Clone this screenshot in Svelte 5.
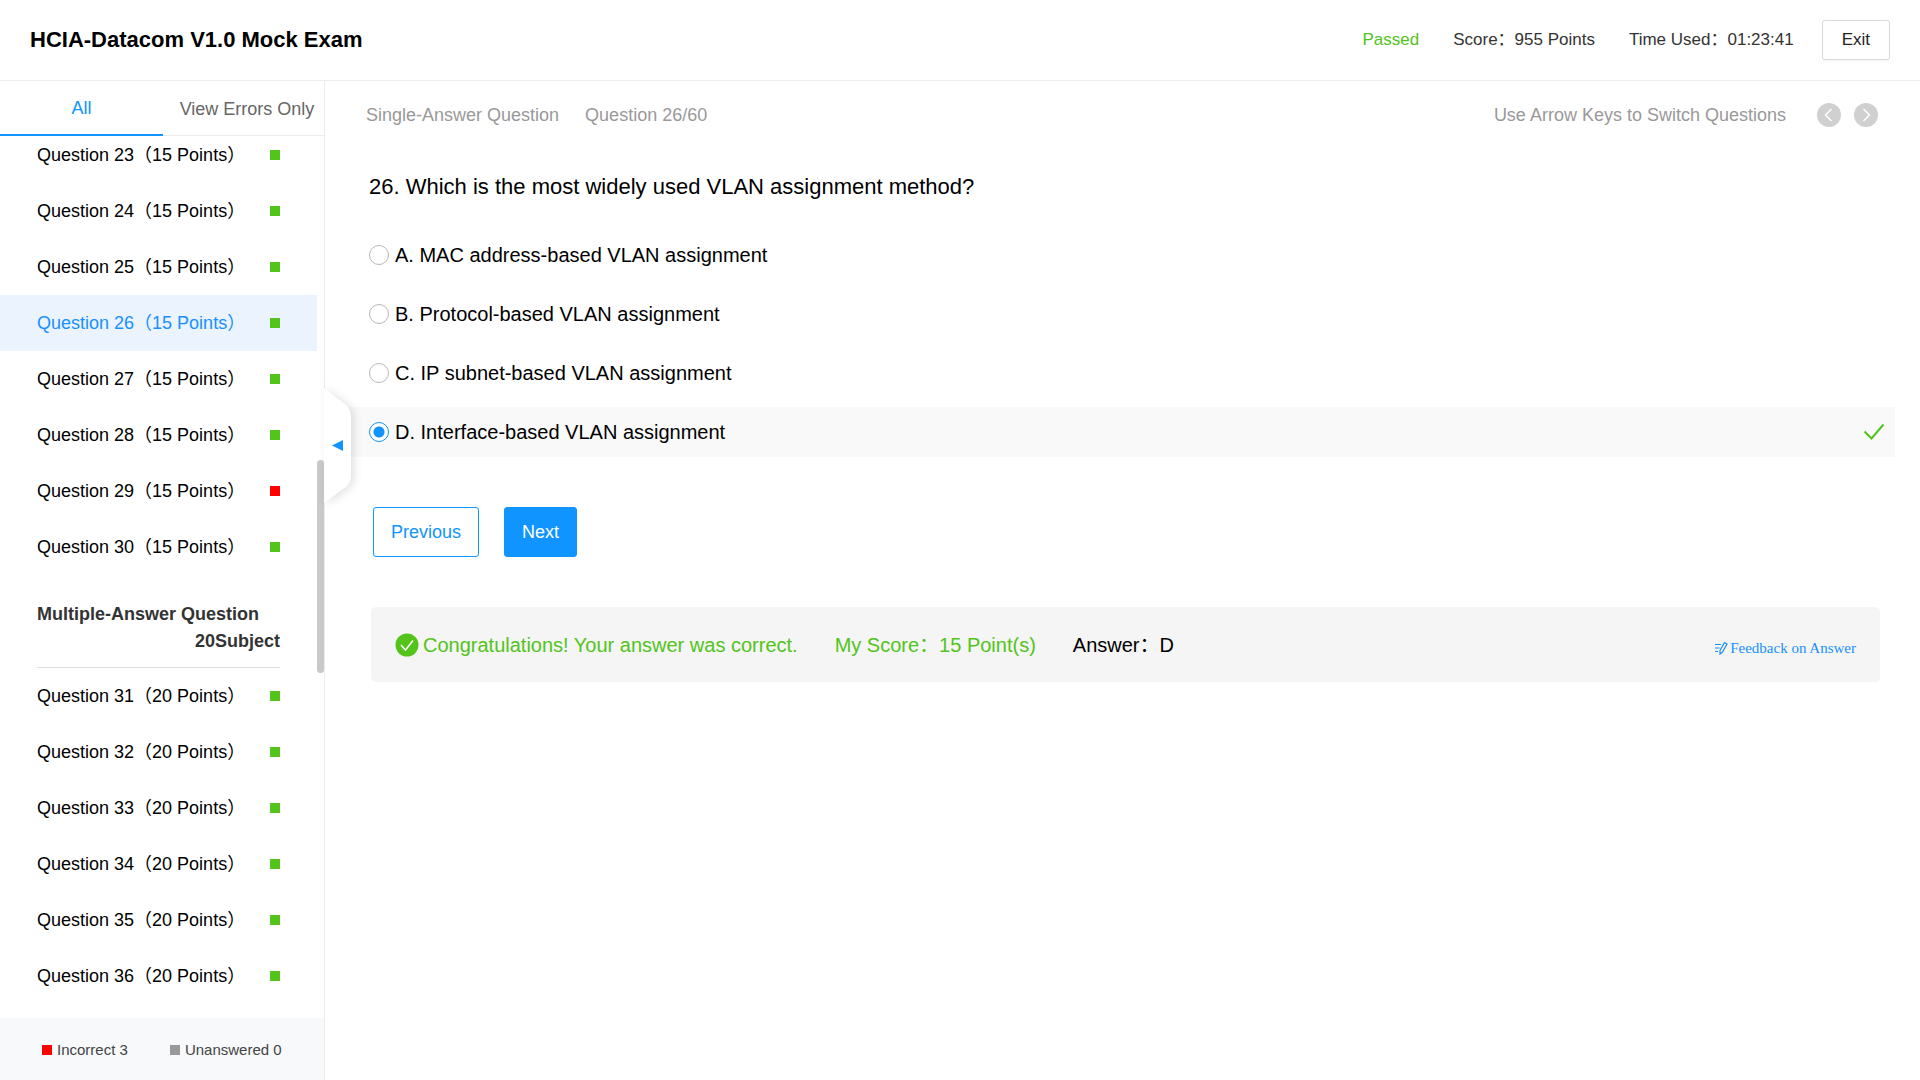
<script>
  const single = [23, 24, 25, 26, 27, 28, 29, 30];
  const multiple = [31, 32, 33, 34, 35, 36];
  const wrong = [29];
  const options = [
    { key: 'A', text: 'MAC address-based VLAN assignment' },
    { key: 'B', text: 'Protocol-based VLAN assignment' },
    { key: 'C', text: 'IP subnet-based VLAN assignment' },
    { key: 'D', text: 'Interface-based VLAN assignment' }
  ];
  const correct = 'D';
  let current = $state(26);
  let choice = $state('D');
</script>

{#snippet row(n, points)}
  <li>
    <button class="question" class:active={current === n} onclick={() => (current = n)}>
      <span>Question {n}</span>
      <span class="points">（{points} Points）</span>
      <i class="mark" class:wrong={wrong.includes(n)}></i>
    </button>
  </li>
{/snippet}

<div class="page">
  <header>
    <h1>HCIA-Datacom V1.0 Mock Exam</h1>
    <div class="status">
      <span class="passed">Passed</span>
      <span>Score：955 Points</span>
      <span>Time Used：01:23:41</span>
    </div>
    <button class="exit">Exit</button>
  </header>

  <div class="body">
    <aside>
      <nav class="tabs">
        <button class="tab selected">All</button>
        <button class="tab">View Errors Only</button>
      </nav>
      <div class="list">
        <ul class="scrolled">
          {#each single as n}{@render row(n, 15)}{/each}
        </ul>
        <h2>
          <span>Multiple-Answer Question</span>
          <span class="count">20Subject</span>
        </h2>
        <ul>
          {#each multiple as n}{@render row(n, 20)}{/each}
        </ul>
        <div class="thumb"></div>
      </div>
      <footer>
        <span class="legend"><i class="mark wrong"></i>Incorrect 3</span>
        <span class="legend"><i class="mark none"></i>Unanswered 0</span>
      </footer>
      <button class="handle" aria-label="Collapse question list">
        <svg width="44" height="140" viewBox="0 0 44 140">
          <path class="flap" d="M0 10 L22 27 Q27 32 27 38 V98 Q27 104 22 109 L0 125 Z" />
          <path class="arrow" d="M8 67.500 L19 62 V73 Z" />
        </svg>
      </button>
    </aside>

    <main>
      <div class="meta">
        <span>Single-Answer Question</span>
        <span>Question 26/60</span>
        <span class="hint">Use Arrow Keys to Switch Questions</span>
        <div class="arrows">
          <button class="round" aria-label="Previous question">
            <svg viewBox="0 0 24 24"><path d="M14.500 6 L8.500 12 L14.500 18" /></svg>
          </button>
          <button class="round" aria-label="Next question">
            <svg viewBox="0 0 24 24"><path d="M9.500 6 L15.500 12 L9.500 18" /></svg>
          </button>
        </div>
      </div>

      <h3>26. Which is the most widely used VLAN assignment method?</h3>

      <div class="options" role="radiogroup" aria-label="Answers">
        {#each options as o}
          <label class="option" class:chosen={choice === o.key}>
            <input type="radio" name="answer" value={o.key} bind:group={choice} />
            <span>{o.key}. {o.text}</span>
            {#if o.key === correct}
              <svg class="tick" width="22" height="18" viewBox="0 0 22 18"><path d="M1.500 8.500 L8.500 15.500 L20.500 1.500" /></svg>
            {/if}
          </label>
        {/each}
      </div>

      <div class="actions">
        <button class="previous">Previous</button>
        <button class="next">Next</button>
      </div>

      <section class="result">
        <svg class="badge" width="24" height="24" viewBox="0 0 24 24">
          <circle cx="12" cy="12" r="11.500" />
          <path d="M6 12 L10.500 17 L18 7.500" />
        </svg>
        <span class="good">Congratulations! Your answer was correct.</span>
        <span class="good score">My Score：15 Point(s)</span>
        <span>Answer：D</span>
        <a href="#feedback">
          <svg width="14" height="14" viewBox="0 0 14 14">
            <path d="M1 3.500 H7 M1 7 H5.500 M1 10.500 H4" />
            <path d="M10.500 1.500 L13 3 L8.500 11 L6 13 L6 9.500 Z" />
          </svg>
          Feedback on Answer
        </a>
      </section>
    </main>
  </div>
</div>

<style>
  :global(body) { margin: 0; }
  .page {
    min-height: 100vh;
    display: flex;
    flex-direction: column;
    font-family: "Liberation Sans", "Noto Sans CJK SC", sans-serif;
    font-size: 18px;
    line-height: 26px;
    color: #000;
    background: #fff;
  }
  * { box-sizing: border-box; }
  button { font: inherit; cursor: pointer; background: none; border: 0; padding: 0; color: inherit; }
  ul { list-style: none; margin: 0; padding: 0; }
  h1, h2, h3 { margin: 0; }

  header {
    height: 81px;
    flex: none;
    display: flex;
    align-items: center;
    padding: 0 30px;
    border-bottom: 1px solid #ededed;
  }
  h1 { font-size: 22px; flex: 1; }
  .status { display: flex; gap: 34px; color: #333; font-size: 17px; }
  .passed { color: #52c41a; }
  .exit {
    margin-left: 28px;
    height: 40px;
    padding: 0 19px;
    border: 1px solid #d9d9d9;
    border-radius: 3px;
    box-shadow: 0 2px 0 #f8f8f8;
    color: #222;
    font-size: 17px;
  }

  .body { flex: 1; display: flex; }
  aside {
    position: relative;
    width: 325px;
    flex: none;
    display: flex;
    flex-direction: column;
    border-right: 1px solid #ebebeb;
  }
  .tabs { display: flex; height: 55px; border-bottom: 1px solid #ebebeb; }
  .tab { flex: 1; color: #666; padding-left: 7px; white-space: nowrap; margin-bottom: -1px; }
  .selected { color: #1094ff; border-bottom: 2px solid #1094ff; flex: none; width: 163px; padding: 0; }
  .list { position: relative; flex: 1; overflow: hidden; }
  .scrolled { margin-top: -9px; }
  .question {
    display: flex;
    align-items: center;
    width: 317px;
    height: 56px;
    padding: 0 37px;
  }
  .question.active { background: #ebf3ff; color: #1890ff; }
  .mark { width: 10px; height: 10px; flex: none; background: #52c41a; }
  .question .mark { margin-left: auto; }
  .mark.wrong { background: #f00; }
  .mark.none { background: #999; }
  h2 {
    display: flex;
    flex-direction: column;
    width: 243px;
    margin: 26px 0 0 37px;
    padding-bottom: 12px;
    border-bottom: 1px solid #ddd;
    font-size: 18px;
    line-height: 27px;
    color: #333;
    white-space: nowrap;
  }
  .count { text-align: right; }
  .thumb {
    position: absolute;
    right: 0;
    top: 324px;
    width: 7px;
    height: 213px;
    border-radius: 4px;
    background: #c9c9c9;
  }
  footer {
    display: flex;
    align-items: center;
    gap: 42px;
    height: 62px;
    padding: 2px 0 0 42px;
    background: #f7f9fb;
    color: #444;
    font-size: 15px;
  }
  .legend { display: flex; align-items: center; gap: 5px; }
  .handle { position: absolute; left: 324px; top: 297px; height: 140px; }
  .handle svg { display: block; overflow: visible; }
  .flap { fill: #fff; filter: drop-shadow(3px 1px 4px rgba(0, 0, 0, 0.12)); }
  .arrow { fill: #1094ff; }

  main { flex: 1; min-width: 0; padding: 21px 25px 0 20px; }
  .meta {
    display: flex;
    align-items: center;
    gap: 26px;
    height: 26px;
    padding: 0 17px 0 21px;
    color: #999;
  }
  .hint { margin-left: auto; }
  .arrows { display: flex; gap: 13px; padding-left: 5px; }
  .round { width: 24px; height: 24px; border-radius: 50%; background: #d0d0d0; }
  .round svg { display: block; fill: none; stroke: #fff; stroke-width: 1.500; }
  h3 { margin: 43px 24px 0; font-size: 22px; line-height: 32px; font-weight: 400; }

  .options { display: flex; flex-direction: column; gap: 9px; margin-top: 27px; font-size: 20px; }
  .option {
    display: flex;
    align-items: center;
    gap: 6px;
    height: 50px;
    padding: 0 10px 0 24px;
  }
  .option.chosen { background: #f9f9f9; }
  input {
    appearance: none;
    width: 20px;
    height: 20px;
    margin: 0;
    border: 1px solid #b8b8b8;
    border-radius: 50%;
    background: #fff;
  }
  input:checked { border-color: #1094ff; background: radial-gradient(circle, #1094ff 5px, #fff 6px); }
  .tick { margin-left: auto; fill: none; stroke: #52c41a; stroke-width: 2; }

  .actions { display: flex; gap: 25px; margin: 50px 28px 0; }
  .previous, .next { height: 50px; padding: 0 17px; border: 1px solid #1094ff; border-radius: 3px; color: #1094ff; }
  .next { background: #1094ff; color: #fff; }

  .result {
    display: flex;
    align-items: center;
    height: 75px;
    margin: 50px 15px 0 26px;
    padding: 0 24px;
    border-radius: 5px;
    background: #f5f5f5;
    font-size: 20px;
  }
  .badge { margin-right: 4px; fill: #52c41a; }
  .badge path { fill: none; stroke: #fff; stroke-width: 1.500; }
  .good { color: #52c41a; }
  .score { margin: 0 37px; }
  a {
    display: flex;
    align-items: center;
    gap: 2px;
    margin-left: auto;
    padding-top: 6px;
    font-family: "Liberation Serif", serif;
    font-size: 15px;
    color: #1890ff;
    text-decoration: none;
  }
  a svg { fill: none; stroke: currentColor; stroke-width: 1.200; }
</style>
